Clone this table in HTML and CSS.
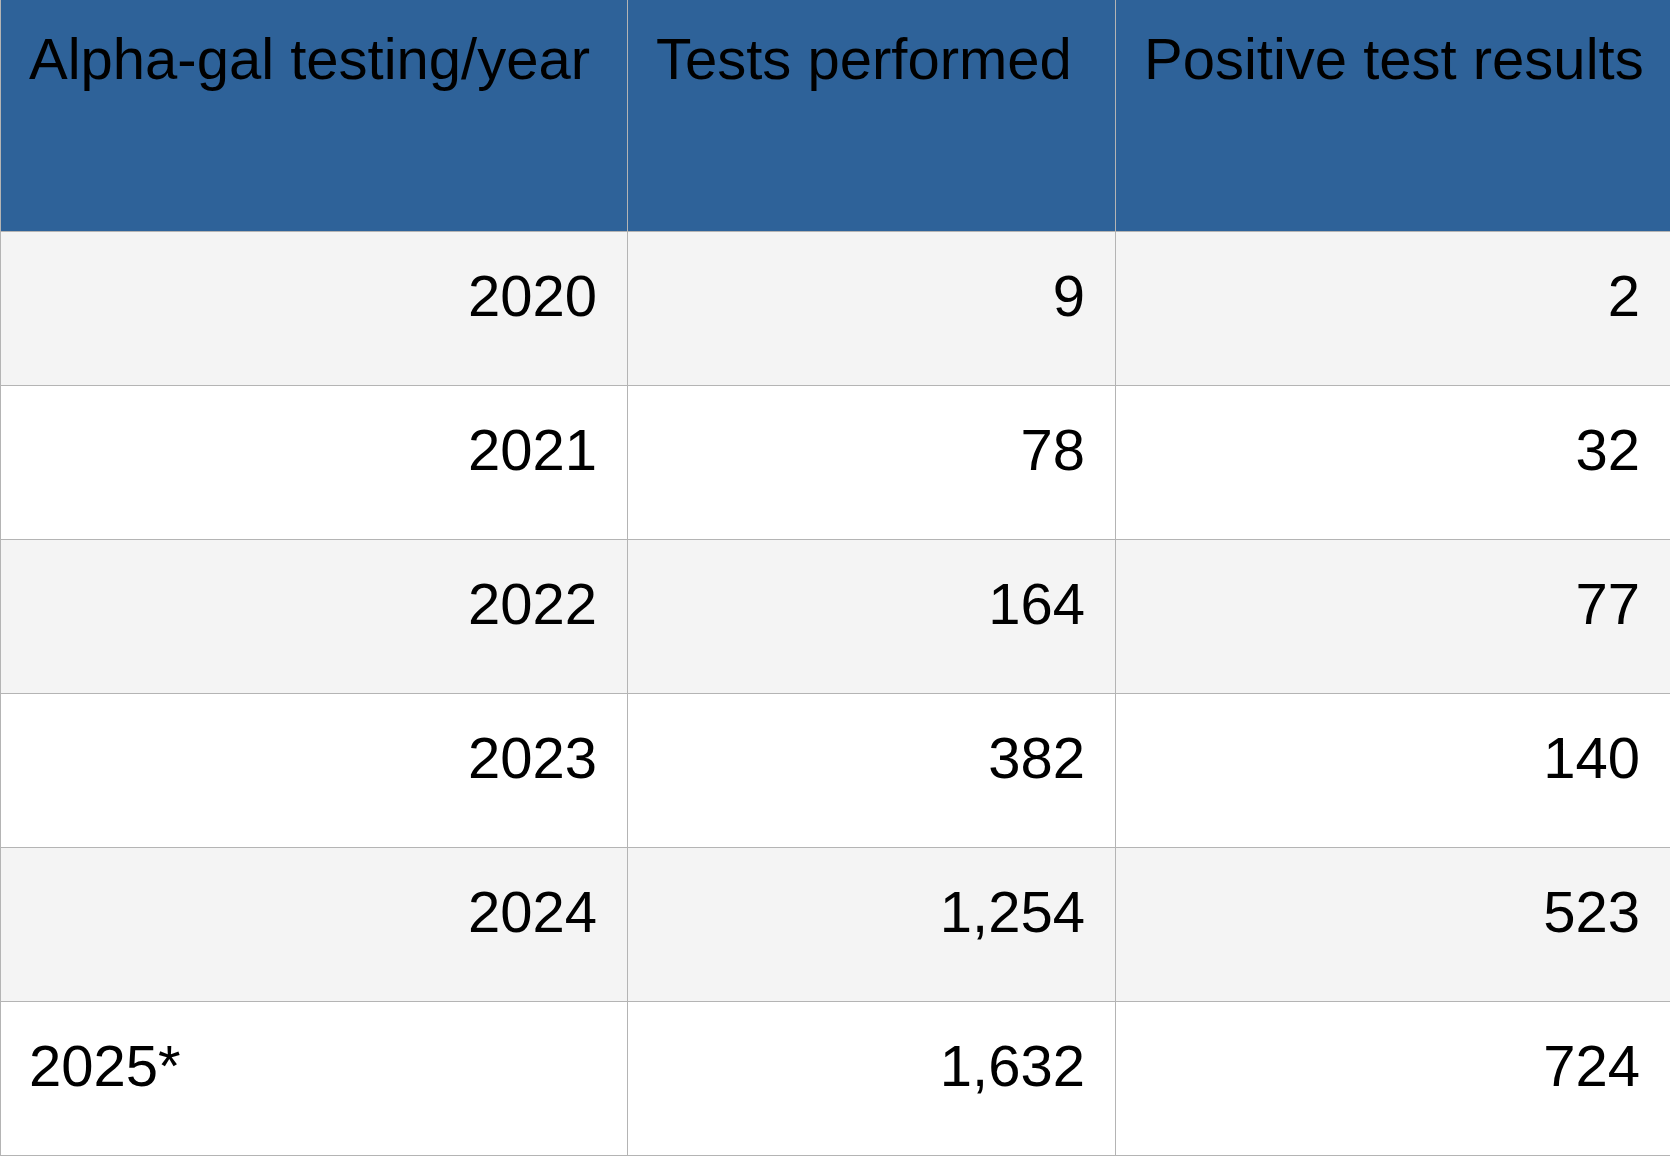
FILE: index.html
```html
<!DOCTYPE html>
<html lang="en">
<head>
<meta charset="utf-8">
<title>Alpha-gal testing</title>
<link rel="stylesheet" href="styles.css">
</head>
<body>
<table class="data">
  <colgroup>
    <col class="c1">
    <col class="c2">
    <col class="c3">
  </colgroup>
  <thead>
    <tr class="head">
      <th>Alpha-gal testing/year</th>
      <th>Tests performed</th>
      <th>Positive test results</th>
    </tr>
  </thead>
  <tbody>
    <tr class="alt"><td class="num">2020</td><td class="num">9</td><td class="num">2</td></tr>
    <tr><td class="num">2021</td><td class="num">78</td><td class="num">32</td></tr>
    <tr class="alt"><td class="num">2022</td><td class="num">164</td><td class="num">77</td></tr>
    <tr><td class="num">2023</td><td class="num">382</td><td class="num">140</td></tr>
    <tr class="alt"><td class="num">2024</td><td class="num">1,254</td><td class="num">523</td></tr>
    <tr><td>2025*</td><td class="num">1,632</td><td class="num">724</td></tr>
  </tbody>
</table>
</body>
</html>
```
FILE: styles.css
```css
html, body {
  margin: 0;
  padding: 0;
  background: #ffffff;
}

.data {
  border-collapse: collapse;
  table-layout: fixed;
  width: 1670px;
  font-family: "Liberation Sans", Arial, Helvetica, sans-serif;
  font-size: 58px;
  color: #000000;
}

.c1 { width: 627px; }
.c2 { width: 488px; }
.c3 { width: 555px; }

.data th,
.data td {
  border: 1px solid #b4b4b4;
  padding: 27px 30px 0 28px;
  vertical-align: top;
  line-height: 64px;
  white-space: nowrap;
}

.data th {
  background: #2e6299;
  font-weight: normal;
  text-align: left;
  border-top: none;
}

.head {
  height: 231px;
}

.data tbody tr {
  height: 154px;
  background: #ffffff;
}

.data tbody tr.alt {
  background: #f4f4f4;
}

.data td {
  padding-top: 32px;
}

.data td.num {
  text-align: right;
}
```
